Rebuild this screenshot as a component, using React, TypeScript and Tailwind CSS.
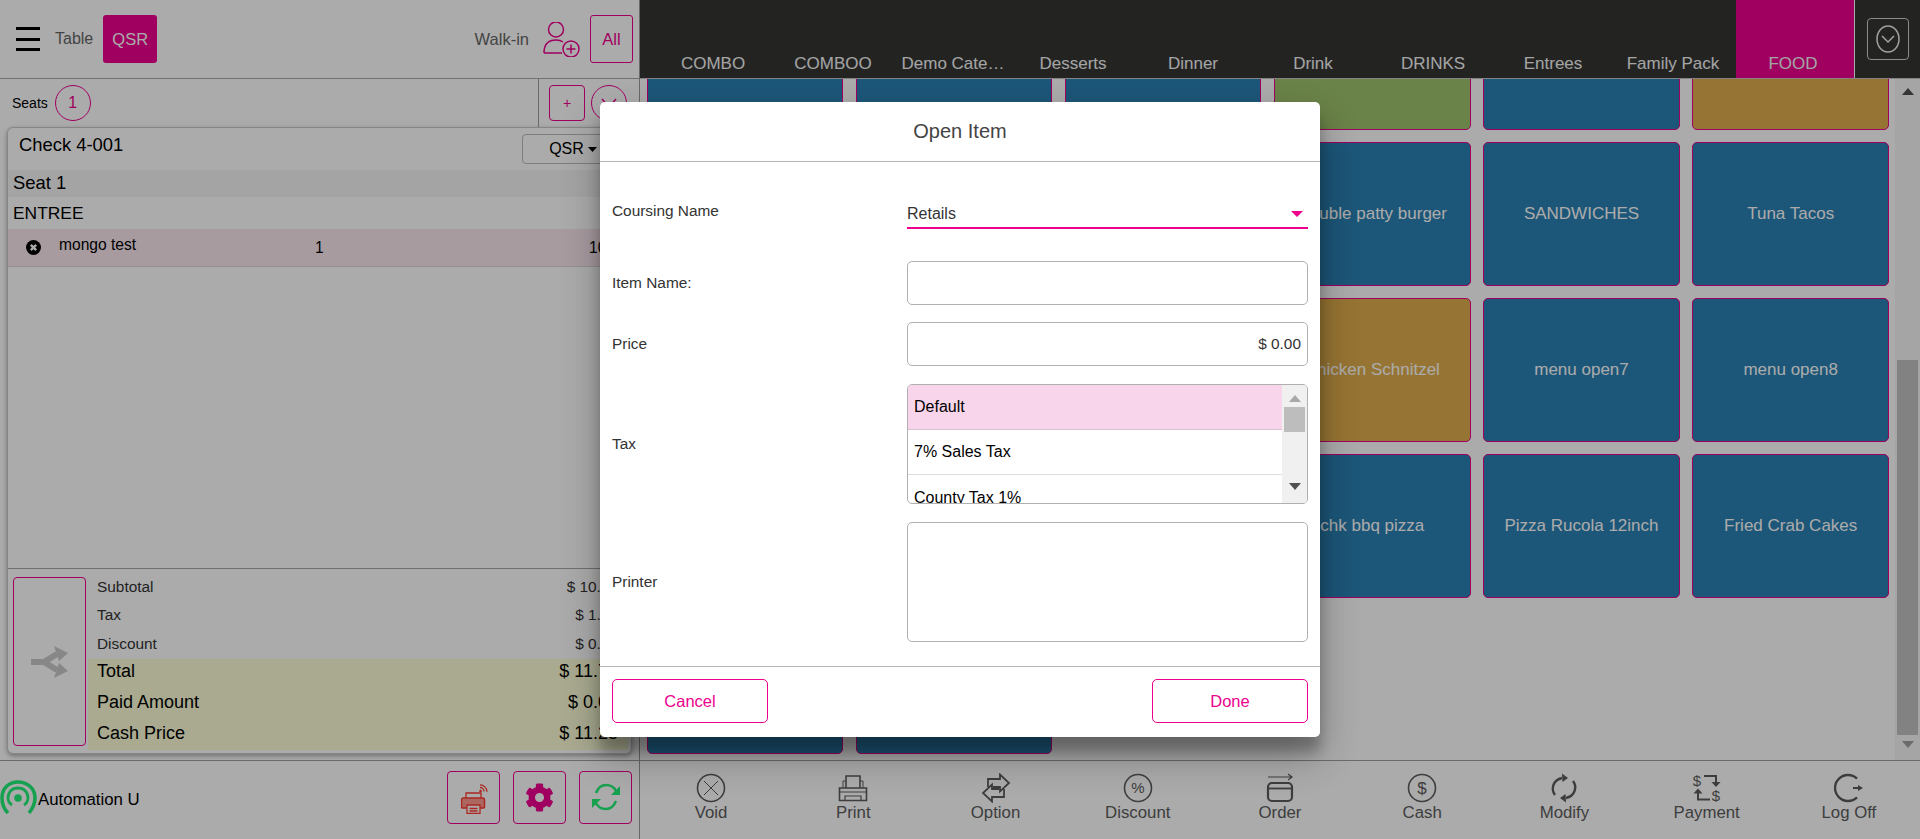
import React from "react";
import { FaCog } from "react-icons/fa";

const categories = ["COMBO", "COMBOO", "Demo Cate…", "Desserts", "Dinner", "Drink", "DRINKS", "Entrees", "Family Pack"];

const tiles: { label: string; color: string }[] = [
  { label: "", color: "bg-[#2a80b4]" },
  { label: "", color: "bg-[#2a80b4]" },
  { label: "", color: "bg-[#2a80b4]" },
  { label: "", color: "bg-[#9fc46c]" },
  { label: "", color: "bg-[#2a80b4]" },
  { label: "", color: "bg-[#e0ae4c]" },
  { label: "", color: "bg-[#2a80b4]" },
  { label: "", color: "bg-[#2a80b4]" },
  { label: "", color: "bg-[#2a80b4]" },
  { label: "Double patty burger", color: "bg-[#2a80b4]" },
  { label: "SANDWICHES", color: "bg-[#2a80b4]" },
  { label: "Tuna Tacos", color: "bg-[#2a80b4]" },
  { label: "", color: "bg-[#2a80b4]" },
  { label: "", color: "bg-[#2a80b4]" },
  { label: "", color: "bg-[#2a80b4]" },
  { label: "Chicken Schnitzel", color: "bg-[#e0ae4c]" },
  { label: "menu open7", color: "bg-[#2a80b4]" },
  { label: "menu open8", color: "bg-[#2a80b4]" },
  { label: "", color: "bg-[#2a80b4]" },
  { label: "", color: "bg-[#2a80b4]" },
  { label: "", color: "bg-[#2a80b4]" },
  { label: "chk bbq pizza", color: "bg-[#2a80b4]" },
  { label: "Pizza Rucola 12inch", color: "bg-[#2a80b4]" },
  { label: "Fried Crab Cakes", color: "bg-[#2a80b4]" },
  { label: "", color: "bg-[#2a80b4]" },
  { label: "", color: "bg-[#2a80b4]" },
];

function VoidIcon() {
  return (
    <svg width="30" height="30" viewBox="0 0 30 30" fill="none" stroke="currentColor">
      <ellipse cx="15" cy="15" rx="13.5" ry="13.5" strokeWidth="1.6" />
      <path d="M8 8l14 14M22 8L8 22" strokeWidth="1" />
    </svg>
  );
}

function PrintIcon() {
  return (
    <svg width="30" height="30" viewBox="0 0 30 30" fill="none" stroke="currentColor" strokeWidth="1.6">
      <path d="M8 15V3h14v12" />
      <path d="M5 15V8h3M25 15V8h-3" strokeWidth="1" />
      <path d="M1.5 15h27v12.5h-27z" />
      <path d="M7 27v-4h16v4" strokeWidth="1.2" />
      <path d="M2 19h26" strokeWidth="1" />
    </svg>
  );
}

function OptionIcon() {
  return (
    <svg width="30" height="30" viewBox="0 0 30 30" fill="none" stroke="currentColor" strokeWidth="1.8" strokeLinejoin="miter">
      <path d="M7 14V6h12V1.500L28 10l-9 8.500V14h-7" />
      <path d="M23 16v8H11v4.500L2 20l9-8.500V16h7" />
    </svg>
  );
}

function DiscountIcon() {
  return (
    <svg width="30" height="30" viewBox="0 0 30 30" fill="none" stroke="currentColor">
      <circle cx="15" cy="15" r="13.5" strokeWidth="1.6" />
      <text x="15" y="20" textAnchor="middle" fontSize="15" fill="currentColor" stroke="none" fontFamily="Liberation Sans">%</text>
    </svg>
  );
}

function OrderIcon() {
  return (
    <svg width="30" height="30" viewBox="0 0 30 30" fill="none" stroke="currentColor">
      <path d="M3 4h24M23 1l4 3-4 3" strokeWidth="1.2" />
      <rect x="3" y="10" width="24" height="18" rx="4" strokeWidth="2.2" />
      <path d="M3 15.5h24" strokeWidth="1.8" />
    </svg>
  );
}

function CashIcon() {
  return (
    <svg width="30" height="30" viewBox="0 0 30 30" fill="none" stroke="currentColor">
      <circle cx="15" cy="15" r="13.5" strokeWidth="1.6" />
      <text x="15" y="21" textAnchor="middle" fontSize="17" fill="currentColor" stroke="none" fontFamily="Liberation Sans">$</text>
    </svg>
  );
}

function ModifyIcon() {
  return (
    <svg width="30" height="30" viewBox="0 0 30 30" fill="none" stroke="currentColor" strokeWidth="2.4">
      <path d="M6 22C1.5 16 4 7 13 5" />
      <path d="M24 8c4.5 6 2 15-7 17" />
      <path d="M13 0.5l6 4.5-5.500 4z" fill="currentColor" stroke="none" />
      <path d="M17 29.500l-6-4.500 5.500-4z" fill="currentColor" stroke="none" />
    </svg>
  );
}

function PaymentIcon() {
  return (
    <svg width="30" height="30" viewBox="0 0 30 30" fill="none" stroke="currentColor">
      <text x="5" y="13" textAnchor="middle" fontSize="15" fill="currentColor" stroke="none" fontFamily="Liberation Sans">$</text>
      <text x="24" y="28" textAnchor="middle" fontSize="15" fill="currentColor" stroke="none" fontFamily="Liberation Sans">$</text>
      <path d="M12 3h12v8" strokeWidth="2" />
      <path d="M19.500 9h9l-4.500 5z" fill="currentColor" stroke="none" />
      <path d="M18 26.500H6v-8" strokeWidth="2" />
      <path d="M1.500 20.500h9l-4.500-5z" fill="currentColor" stroke="none" />
    </svg>
  );
}

function LogOffIcon() {
  return (
    <svg width="30" height="30" viewBox="0 0 30 30" fill="none" stroke="currentColor" strokeWidth="2.4">
      <path d="M23 5.600A13 13 0 1 0 23 24.400" />
      <path d="M19 15h6" strokeWidth="2" />
      <path d="M24 12l5 3-5 3z" fill="currentColor" stroke="none" />
    </svg>
  );
}

const actions: { label: string; icon: React.ReactNode }[] = [
  { label: "Void", icon: <VoidIcon /> },
  { label: "Print", icon: <PrintIcon /> },
  { label: "Option", icon: <OptionIcon /> },
  { label: "Discount", icon: <DiscountIcon /> },
  { label: "Order", icon: <OrderIcon /> },
  { label: "Cash", icon: <CashIcon /> },
  { label: "Modify", icon: <ModifyIcon /> },
  { label: "Payment", icon: <PaymentIcon /> },
  { label: "Log Off", icon: <LogOffIcon /> },
];

function ArrowUp({ color }: { color: string }) {
  return (
    <svg width="12" height="7" viewBox="0 0 12 7">
      <path d="M0 7L6 0l6 7z" fill={color} />
    </svg>
  );
}

function ArrowDown({ color }: { color: string }) {
  return (
    <svg width="12" height="7" viewBox="0 0 12 7">
      <path d="M0 0h12L6 7z" fill={color} />
    </svg>
  );
}

function LeftPanel() {
  return (
    <div className="w-[640px] h-full flex flex-col border-r border-[#9c9c9c]">
      <div className="h-[79px] flex items-center border-b border-[#a8a8a8] shrink-0">
        <div className="ml-[16px] w-[24px] h-[24px] flex flex-col justify-between">
          <div className="h-[3px] bg-black" />
          <div className="h-[3px] bg-black" />
          <div className="h-[3px] bg-black" />
        </div>
        <span className="ml-[15px] text-[16px] text-[#666666]">Table</span>
        <div className="ml-[10px] w-[54px] h-[48px] rounded-[3px] bg-[#ef008f] text-white text-[16.500px] flex items-center justify-center">QSR</div>
        <span className="ml-auto text-[16.500px] text-[#666666]">Walk-in</span>
        <svg className="ml-[14px]" width="37" height="35" viewBox="0 0 37 35" fill="none" stroke="#ef008f" strokeWidth="1.5">
          <ellipse cx="13" cy="7.500" rx="7.500" ry="7.500" />
          <path d="M1 31C1 22 6 18 13 18c3 0 5 .5 7 2M1 31h18" />
          <circle cx="28" cy="27" r="8" />
          <path d="M28 22.500v9M23.500 27h9" />
        </svg>
        <div className="ml-[10px] mr-[6px] w-[43px] h-[48px] rounded-[3px] border border-[#ef008f] text-[#ef008f] text-[16.500px] flex items-center justify-center">All</div>
      </div>
      <div className="h-[48px] flex items-center shrink-0">
        <span className="ml-[12px] text-[14px] text-black">Seats</span>
        <div className="ml-[7px] w-[36px] h-[36px] rounded-full border border-[#ef008f] text-[#ef008f] text-[16px] flex items-center justify-center">1</div>
        <div className="ml-auto h-full flex items-center border-l border-[#a0a0a0] pl-[10px] pr-[12px] gap-[6px]">
          <div className="w-[36px] h-[36px] rounded-[4px] border border-[#ef008f] text-[#ef008f] text-[14px] flex items-center justify-center">+</div>
          <div className="w-[36px] h-[36px] rounded-full border border-[#ef008f] flex items-center justify-center">
            <svg width="20" height="12" viewBox="0 0 20 12" fill="none" stroke="#ef008f" strokeWidth="1.5">
              <path d="M3 2l7 8 7-8" />
            </svg>
          </div>
        </div>
      </div>
      <div className="ml-[7px] w-[625px] h-[627px] shrink-0 flex flex-col rounded-[6px] border border-[#c8c8c8] bg-white shadow-[0_2px_5px_rgba(0,0,0,0.35)]">
        <div className="h-[42px] shrink-0 relative">
          <span className="absolute left-[11px] top-[3px] text-[18.400px] text-black">Check 4-001</span>
          <div className="absolute right-[7px] top-[6px] w-[102px] h-[30px] rounded-[4px] border border-[#bdbdbd] flex items-center justify-center gap-[4px] text-[16px] text-black">
            QSR
            <svg width="9" height="5" viewBox="0 0 9 5"><path d="M0 0h9L4.500 5z" fill="#000" /></svg>
          </div>
        </div>
        <div className="h-[27px] shrink-0 bg-[#f5f5f5] flex items-center pl-[5px] pb-[2px] text-[18.400px] text-black">Seat 1</div>
        <div className="h-[32px] shrink-0 flex items-center pl-[5px] text-[17.400px] text-black">ENTREE</div>
        <div className="h-[38px] shrink-0 bg-[#fae8ef] border-b border-[#d8d8d8] flex items-center text-[15.600px] text-black relative">
          <svg className="ml-[18px]" width="15" height="15" viewBox="0 0 14 14">
            <circle cx="7" cy="7" r="7" fill="#000" />
            <path d="M4.500 4.500l5 5M9.500 4.500l-5 5" stroke="#fff" strokeWidth="2.200" />
          </svg>
          <span className="ml-[18px] -mt-[5px]">mongo test</span>
          <span className="absolute left-[307px]">1</span>
          <span className="absolute right-[3px]">10.60</span>
        </div>
        <div className="flex-1" />
        <div className="h-[185px] shrink-0 border-t border-[#a8a8a8] flex pt-[8px]">
          <div className="ml-[5px] w-[73px] h-[169px] rounded-[4px] border border-[#ef008f] flex items-center justify-center">
            <svg width="40" height="32" viewBox="0 0 40 32" fill="none" stroke="#c9c9c9" strokeWidth="6">
              <path d="M1 16h13l13-8M14 16l13 8" />
              <path d="M24 0l14 7-9 8z" fill="#c9c9c9" stroke="none" />
              <path d="M24 32l14-7-9-8z" fill="#c9c9c9" stroke="none" />
            </svg>
          </div>
          <div className="ml-[2px] flex-1 mr-[3px] flex flex-col">
            <div className="-mt-[5px] h-[29px] flex items-center justify-between pl-[9px] pr-[10px] text-[15.400px] text-[#333333]"><span>Subtotal</span><span>$ 10.60</span></div>
            <div className="h-[28px] flex items-center justify-between pl-[9px] pr-[10px] text-[15.400px] text-[#333333]"><span>Tax</span><span>$ 1.13</span></div>
            <div className="h-[30px] pb-[1px] flex items-center justify-between pl-[9px] pr-[10px] text-[15.400px] text-[#333333]"><span>Discount</span><span>$ 0.00</span></div>
            <div className="h-[91px] bg-[#fcfed7] flex flex-col text-[18px] text-black">
              <div className="-mt-[3px] h-[31px] shrink-0 flex items-center justify-between pl-[9px] pr-[10px]"><span>Total</span><span>$ 11.73</span></div>
              <div className="h-[31px] shrink-0 flex items-center justify-between pl-[9px] pr-[10px]"><span>Paid Amount</span><span>$ 0.00</span></div>
              <div className="h-[31px] shrink-0 flex items-center justify-between pl-[9px] pr-[10px]"><span>Cash Price</span><span>$ 11.25</span></div>
            </div>
          </div>
        </div>
      </div>
      <div className="mt-[6px] flex-1 border-t border-[#a0a0a0] flex items-center">
        <svg width="37" height="36" viewBox="0 0 37 36" fill="none" stroke="#22f078" className="mt-[-4px]">
          <path d="M8 33C3 28 2 22 2 18 2 8 9 2 18 2s17 6 17 16c0 5-2 10-6 15" strokeWidth="3.600" />
          <path d="M12 25c-3-2-4-4-4-7 0-6 4-10 10-10s10 4 10 10c0 3-1 5-4 7" strokeWidth="2.800" />
          <circle cx="18" cy="18" r="3.800" fill="#22f078" stroke="none" />
        </svg>
        <span className="ml-[1px] -mt-[1px] text-[16.800px] text-black">Automation U</span>
        <div className="ml-auto mr-[7px] -mt-[6px] flex gap-[13px]">
          <div className="w-[53px] h-[53px] rounded-[4px] border border-[#ef008f] flex items-center justify-center">
            <svg className="mt-[4px] ml-[1px]" width="27" height="30" viewBox="0 0 27 30" fill="none" stroke="#ff3b30" strokeWidth="1.300">
              <path d="M5 14V9h15v5" />
              <path d="M5.500 24H1.500a1 1 0 0 1-1-1v-7a2 2 0 0 1 2-2h19a2 2 0 0 1 2 2v7a1 1 0 0 1-1 1h-4" fill="#ff9a90" strokeWidth="1.500" />
              <path d="M6 21h13v8.500H6z" fill="#ffffff" />
              <path d="M8.500 24.500h8M8.500 27h8" />
              <path d="M19 3.500a4 4 0 0 1 4 4M19 .8a7 7 0 0 1 7 7" strokeWidth="1.300" />
              <circle cx="19.500" cy="7" r="1.300" fill="#ff3b30" stroke="none" />
            </svg>
          </div>
          <div className="w-[53px] h-[53px] rounded-[4px] border border-[#ef008f] flex items-center justify-center">
            <FaCog size={29} color="#ef008f" />
          </div>
          <div className="w-[53px] h-[53px] rounded-[4px] border border-[#ef008f] flex items-center justify-center">
            <svg width="30" height="28" viewBox="0 0 30 28" fill="none" stroke="#22f078" strokeWidth="2.500">
              <path d="M5 10C7 5 11 2 15 2c5 0 8 2 10 6" />
              <path d="M25 18c-2 5-6 8-10 8-5 0-8-2-10-6" />
              <path d="M29 3v9h-9z" fill="#22f078" stroke="none" />
              <path d="M1 25v-9h9z" fill="#22f078" stroke="none" />
            </svg>
          </div>
        </div>
      </div>
    </div>
  );
}

function RightPanel() {
  return (
    <div className="flex-1 h-full flex flex-col min-w-0">
      <div className="h-[79px] shrink-0 bg-[#353534] border-b border-[#c4c4c4] flex pl-[13px] text-[#f6f6f6] text-[17px]">
        {categories.map((c) => (
          <div key={c} className="w-[120px] pt-[51px] text-center whitespace-nowrap">{c}</div>
        ))}
        <div className="ml-[3px] w-[118px] pr-[4px] pt-[51px] text-center bg-[#ef008f]">FOOD</div>
        <div className="flex-1 border-l border-white flex items-start justify-center pt-[18px]">
          <div className="w-[42px] h-[42px] rounded-[4px] border border-[#d0d0d0] flex items-center justify-center">
            <svg width="26" height="30" viewBox="0 0 26 30" fill="none" stroke="#f0f0f0" strokeWidth="1.500">
              <ellipse cx="13" cy="15" rx="11" ry="13" />
              <path d="M7 12l6 6 6-6" />
            </svg>
          </div>
        </div>
      </div>
      <div className="flex-1 min-h-0 flex overflow-hidden">
        <div className="flex-1 min-w-0 pl-[6.500px] overflow-hidden">
          <div className="-mt-[93px] grid grid-cols-[repeat(6,196.500px)] auto-rows-[144px] gap-x-[12.700px] gap-y-[12px]">
            {tiles.map((t, i) => (
              <div key={i} className={`${t.color} rounded-[5px] border border-[#ef008f] flex items-center justify-center text-white text-[17px]`}>
                {t.label}
              </div>
            ))}
          </div>
        </div>
        <div className="w-[25px] shrink-0 bg-[#f6f6f6] flex flex-col items-center">
          <div className="h-[24px] flex items-center justify-center"><ArrowUp color="#505050" /></div>
          <div className="mt-[257px] w-[21px] h-[375px] bg-[#c2c2c2]" />
          <div className="mt-[6px]"><ArrowDown color="#a0a0a0" /></div>
        </div>
      </div>
      <div className="h-[79px] shrink-0 border-t border-[#a0a0a0] flex text-[#5c5c5c]">
        {actions.map((a) => (
          <div key={a.label} className="flex-1 flex flex-col items-center pt-[12px]">
            {a.icon}
            <span className="text-[16.800px] leading-[20px]">{a.label}</span>
          </div>
        ))}
      </div>
    </div>
  );
}

function OpenItemDialog() {
  const label = "text-[15.400px] text-[#333333]";
  const box = "rounded-[5px] border border-[#b0b0b0] bg-white";
  return (
    <div className="absolute left-[600px] top-[102px] w-[720px] h-[635px] rounded-[5px] bg-white flex flex-col shadow-[0_19px_38px_rgba(0,0,0,0.30),0_15px_12px_rgba(0,0,0,0.22)]">
      <div className="h-[60px] shrink-0 border-b border-[#b4b4b4] flex items-center justify-center pb-[2px] text-[20px] text-[#444444]">Open Item</div>
      <div className="flex-1 px-[12px] grid grid-cols-[295px_401px] content-start">
        <div className={`mt-[33px] h-[34px] pb-[2px] flex items-center ${label}`}>Coursing Name</div>
        <div className="mt-[33px] h-[34px] border-b-2 border-[#ec008c] flex items-center justify-between pt-[6px] pr-[5px] text-[16px] text-[#333333]">
          <span>Retails</span>
          <svg width="12" height="6" viewBox="0 0 12 6"><path d="M0 0h12L6 6z" fill="#ec008c" /></svg>
        </div>
        <div className={`mt-[32px] h-[44px] flex items-center ${label}`}>Item Name:</div>
        <div className={`mt-[32px] h-[44px] ${box}`} />
        <div className={`mt-[17px] h-[44px] flex items-center ${label}`}>Price</div>
        <div className={`mt-[17px] h-[44px] ${box} flex items-center justify-end pr-[6px] text-[15.400px] text-[#333333]`}>$ 0.00</div>
        <div className={`mt-[18px] h-[120px] flex items-center ${label}`}>Tax</div>
        <div className={`mt-[18px] h-[120px] ${box} overflow-hidden flex`}>
          <div className="flex-1 min-w-0 text-[16px] text-black">
            <div className="h-[45px] bg-[#f8d5ea] border-b border-[#d8c4d0] flex items-center pl-[6px]">Default</div>
            <div className="h-[45px] border-b border-[#dddddd] flex items-center pl-[6px]">7% Sales Tax</div>
            <div className="h-[45px] flex items-center pl-[6px]">County Tax 1%</div>
          </div>
          <div className="w-[25px] shrink-0 bg-[#f0f0f0] flex flex-col items-center">
            <div className="mt-[10px]"><ArrowUp color="#a8a8a8" /></div>
            <div className="mt-[5px] w-[21px] h-[25px] bg-[#bdbdbd]" />
            <div className="mt-[51px]"><ArrowDown color="#505050" /></div>
          </div>
        </div>
        <div className={`mt-[18px] h-[120px] flex items-center ${label}`}>Printer</div>
        <div className={`mt-[18px] h-[120px] ${box}`} />
      </div>
      <div className="h-[71px] shrink-0 border-t border-[#b4b4b4] px-[12px] pt-[12px] flex justify-between items-start">
        <button className="w-[156px] h-[44px] rounded-[5px] border border-[#ec008c] text-[#ec008c] text-[16.500px]">Cancel</button>
        <button className="w-[156px] h-[44px] rounded-[5px] border border-[#ec008c] text-[#ec008c] text-[16.500px]">Done</button>
      </div>
    </div>
  );
}

export default function App() {
  return (
    <div className="relative w-[1920px] h-[839px] overflow-hidden bg-white flex font-['Liberation_Sans',Arial,sans-serif]">
      <LeftPanel />
      <RightPanel />
      <div className="absolute inset-0 bg-[rgba(0,0,0,0.33)]" />
      <OpenItemDialog />
    </div>
  );
}
